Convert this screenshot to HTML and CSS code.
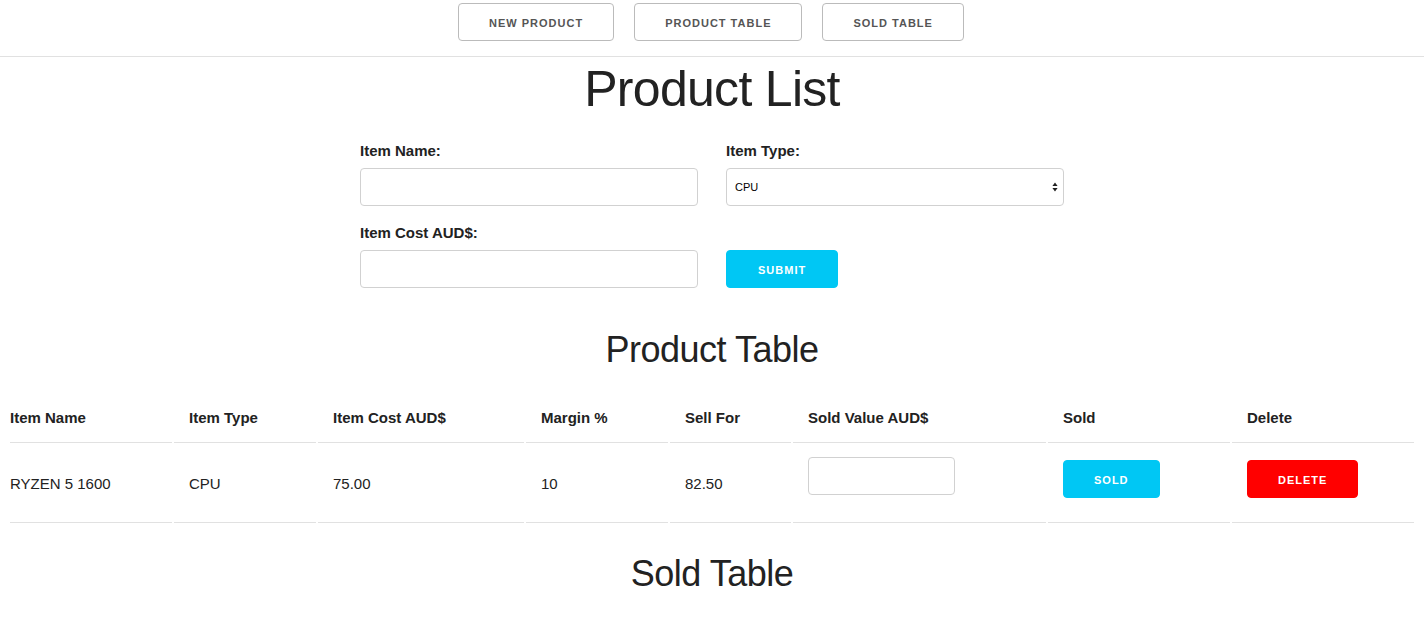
FILE: index.html
```html
<!DOCTYPE html>
<html lang="en">
<head>
<meta charset="utf-8">
<title>Product List</title>
<link rel="stylesheet" href="styles.css">
</head>
<body>
<nav class="nav">
  <button class="btn">New Product</button>
  <button class="btn">Product Table</button>
  <button class="btn">Sold Table</button>
</nav>
<main class="main">
  <h1 class="title">Product List</h1>
  <form class="form">
    <div class="field">
      <label class="label">Item Name:</label>
      <input class="input" type="text">
    </div>
    <div class="field">
      <label class="label">Item Type:</label>
      <select class="select"><option>CPU</option></select>
    </div>
    <div class="field">
      <label class="label">Item Cost AUD$:</label>
      <input class="input" type="text">
    </div>
    <div class="field field-end">
      <button class="btn btn-primary btn-submit" type="button">Submit</button>
    </div>
  </form>
  <h2 class="subtitle">Product Table</h2>
  <table class="table">
    <thead>
      <tr>
        <th class="c1">Item Name</th>
        <th class="c2">Item Type</th>
        <th class="c3">Item Cost AUD$</th>
        <th class="c4">Margin %</th>
        <th class="c5">Sell For</th>
        <th class="c6">Sold Value AUD$</th>
        <th class="c7">Sold</th>
        <th class="c8">Delete</th>
      </tr>
    </thead>
    <tbody>
      <tr>
        <td>RYZEN 5 1600</td>
        <td>CPU</td>
        <td>75.00</td>
        <td>10</td>
        <td>82.50</td>
        <td><input class="input input-sold" type="text"></td>
        <td><button class="btn btn-primary" type="button">Sold</button></td>
        <td><button class="btn btn-danger" type="button">Delete</button></td>
      </tr>
    </tbody>
  </table>
  <h2 class="subtitle">Sold Table</h2>
</main>
</body>
</html>
```

FILE: styles.css
```css
html, body {
  margin: 0;
  padding: 0;
  background: #fff;
}
body {
  font-family: "Liberation Sans", Arial, Helvetica, sans-serif;
  font-size: 15px;
  line-height: 24px;
  color: #222;
}
.nav {
  display: flex;
  justify-content: center;
  gap: 20px;
  padding: 3px 2px 15px 0;
  border-bottom: 1px solid #e1e1e1;
}
.btn {
  display: inline-block;
  box-sizing: border-box;
  height: 38px;
  padding: 0 30px;
  margin: 0;
  font-family: "Liberation Sans", Arial, Helvetica, sans-serif;
  font-size: 11px;
  font-weight: bold;
  letter-spacing: 1px;
  line-height: 38px;
  text-transform: uppercase;
  text-align: center;
  color: #555;
  background: transparent;
  border: 1px solid #bbb;
  border-radius: 4px;
  white-space: nowrap;
  cursor: pointer;
}
.btn-primary {
  color: #fff;
  background: #00c7f4;
  border-color: #00c7f4;
}
.btn-danger {
  color: #fff;
  background: #ff0000;
  border-color: #ff0000;
}
.main {
  padding: 0 8px;
}
.title {
  margin: 2px 0 20px;
  font-size: 50px;
  line-height: 60px;
  font-weight: normal;
  letter-spacing: -0.7px;
  text-align: center;
  color: #222;
}
.subtitle {
  margin: 0 0 19px;
  font-size: 36px;
  line-height: 46px;
  font-weight: normal;
  letter-spacing: -0.5px;
  text-align: center;
  color: #222;
}
.form {
  display: grid;
  grid-template-columns: 338px 338px;
  column-gap: 28px;
  justify-content: center;
  margin: 0 0 24px;
}
.field {
  display: flex;
  flex-direction: column;
}
.field-end {
  justify-content: flex-end;
  align-items: flex-start;
}
.label {
  display: block;
  font-weight: bold;
  margin-bottom: 5px;
}
.input,
.select {
  box-sizing: border-box;
  height: 38px;
  margin: 0 0 15px;
  padding: 6px 10px;
  border: 1px solid #d1d1d1;
  border-radius: 4px;
  background: #fff;
  font-family: "Liberation Sans", Arial, Helvetica, sans-serif;
  font-size: 15px;
  outline: none;
}
.select {
  -webkit-appearance: none;
  appearance: none;
  padding: 0 8px;
  font-size: 11px;
  color: #000;
  background-image: url("data:image/svg+xml;utf8,<svg xmlns='http://www.w3.org/2000/svg' width='6' height='10' viewBox='0 0 6 10'><path d='M3 0.5 L5.6 4 H0.4 Z M3 9.5 L5.6 6 H0.4 Z' fill='%23222'/></svg>");
  background-repeat: no-repeat;
  background-position: right 5px center;
  background-size: 6px 10px;
}
.btn-submit {
  margin-bottom: 15px;
  padding: 0 31px;
}
.table {
  width: 100%;
  table-layout: fixed;
  border-collapse: separate;
  border-spacing: 2px;
  margin: 0 0 26px;
}
.table th,
.table td {
  box-sizing: border-box;
  padding: 12px 15px;
  text-align: left;
  border-bottom: 1px solid #e1e1e1;
  vertical-align: middle;
}
.table th {
  font-weight: bold;
}
.table th:first-child,
.table td:first-child {
  padding-left: 0;
}
.table th:last-child,
.table td:last-child {
  padding-right: 0;
}
.table td .btn {
  margin-bottom: 10px;
}
.c1 { width: 162px; }
.c2 { width: 142px; }
.c3 { width: 206px; }
.c4 { width: 142px; }
.c5 { width: 121px; }
.c6 { width: 253px; }
.c7 { width: 182px; }
.c8 { width: 182px; }
.input-sold {
  width: 147px;
}
```
